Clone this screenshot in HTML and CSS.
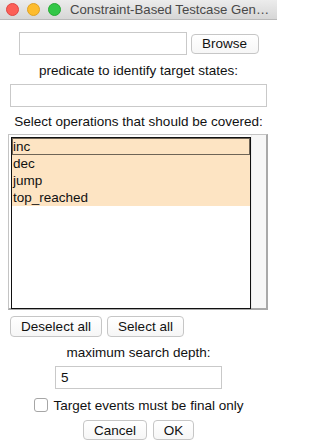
FILE: index.html
```html
<!DOCTYPE html>
<html>
<head>
<meta charset="utf-8">
<link rel="stylesheet" href="styles.css">
</head>
<body>
<div class="window">
  <div class="titlebar">
    <span class="light red"></span>
    <span class="light yellow"></span>
    <span class="light green"></span>
    <span class="title">Constraint-Based Testcase Gen…</span>
  </div>
  <div class="content">
    <div class="row-file">
      <div class="field file-field"></div>
      <button class="btn browse">Browse</button>
    </div>
    <div class="label label-pred">predicate to identify target states:</div>
    <div class="field pred-field"></div>
    <div class="label label-ops">Select operations that should be covered:</div>
    <div class="listbox">
      <div class="list">
        <div class="item sel focus">inc</div>
        <div class="item sel">dec</div>
        <div class="item sel">jump</div>
        <div class="item sel">top_reached</div>
      </div>
      <div class="scroll"></div>
    </div>
    <div class="row-select">
      <button class="btn deselect">Deselect all</button>
      <button class="btn selectall">Select all</button>
    </div>
    <div class="label label-depth">maximum search depth:</div>
    <div class="field depth-field">5</div>
    <div class="row-check">
      <span class="checkbox"></span>
      <span class="check-text">Target events must be final only</span>
    </div>
    <div class="row-ok">
      <button class="btn cancel">Cancel</button>
      <button class="btn ok">OK</button>
    </div>
  </div>
</div>
</body>
</html>
```
FILE: styles.css
```css
html, body {
  margin: 0;
  padding: 0;
  background: #ffffff;
}
body {
  font-family: "Liberation Sans", Arial, sans-serif;
  font-size: 13.5px;
  color: #111;
  width: 277px;
  height: 448px;
  overflow: hidden;
}
.window {
  display: flex;
  flex-direction: column;
}
.titlebar {
  height: 19px;
  border-bottom: 1px solid #b9b9b9;
  background: linear-gradient(#ececec, #d6d6d6);
  display: flex;
  align-items: center;
  padding-left: 6px;
}
.light {
  width: 11px;
  height: 11px;
  border-radius: 50%;
  margin-right: 8px;
  flex: none;
}
.red { background: #fc5f57; border: 0.5px solid #df4744; }
.yellow { background: #fdbc2e; border: 0.5px solid #dea123; }
.green { background: #33c748; border: 0.5px solid #27aa35; }
.title {
  margin-left: 1px;
  font-size: 13.2px;
  color: #484848;
  white-space: nowrap;
}
.content {
  display: flex;
  flex-direction: column;
  align-items: center;
}
.field {
  box-sizing: border-box;
  height: 23px;
  border: 1px solid #c9c9c9;
  background: #fff;
}
.btn {
  box-sizing: border-box;
  height: 21px;
  border: 1px solid #c6c6c6;
  border-radius: 4px;
  background: linear-gradient(#ffffff, #f6f6f6);
  font-family: "Liberation Sans", Arial, sans-serif;
  font-size: 13.5px;
  color: #111;
  padding: 0;
  margin: 0;
}
.row-file {
  margin-top: 12px;
  display: flex;
  align-items: center;
  gap: 4px;
}
.file-field { width: 168px; }
.browse { width: 68px; height: 20px; }
.label {
  height: 16px;
  line-height: 16px;
  text-align: center;
  white-space: nowrap;
}
.label-pred { margin-top: 8px; }
.pred-field { margin-top: 5px; width: 257px; }
.label-ops { margin-top: 7px; }
.listbox {
  margin-top: 4px;
  align-self: flex-start;
  margin-left: 8px;
  box-sizing: border-box;
  width: 260px;
  height: 176px;
  border: 1px solid #c4c4c4;
  border-right: 2px solid #a9a9a9;
  border-bottom: 2px solid #a9a9a9;
  padding: 2px 0 0 2px;
  display: flex;
  background: #fff;
}
.list {
  box-sizing: border-box;
  width: 240px;
  height: 172px;
  border: 1px solid #111;
  background: #fff;
}
.scroll {
  flex: 1;
  margin-top: -2px;
  background: #f7f7f7;
  border-left: 1px solid #ececec;
}
.item {
  box-sizing: border-box;
  height: 17px;
  line-height: 17px;
  padding-left: 1px;
  white-space: nowrap;
  color: #111;
}
.item.sel { background: #fde4c3; }
.item.focus {
  border: 1px solid #6e6456;
  line-height: 15px;
  padding-left: 0;
}
.row-select {
  margin-top: 6px;
  align-self: flex-start;
  margin-left: 10px;
  display: flex;
  gap: 5px;
}
.deselect { width: 92px; }
.selectall { width: 77px; }
.label-depth { margin-top: 8px; }
.depth-field {
  margin-top: 5px;
  width: 167px;
  padding-left: 5px;
  line-height: 21px;
}
.row-check {
  margin-top: 8px;
  height: 16px;
  display: flex;
  align-items: center;
  gap: 6px;
}
.checkbox {
  box-sizing: border-box;
  width: 14px;
  height: 14px;
  border: 1px solid #a6a6a6;
  border-radius: 3px;
  background: #fff;
}
.check-text { white-space: nowrap; }
.row-ok {
  margin-top: 7px;
  display: flex;
  gap: 6px;
}
.cancel { width: 64px; height: 20px; }
.ok { width: 41px; height: 20px; }
```
